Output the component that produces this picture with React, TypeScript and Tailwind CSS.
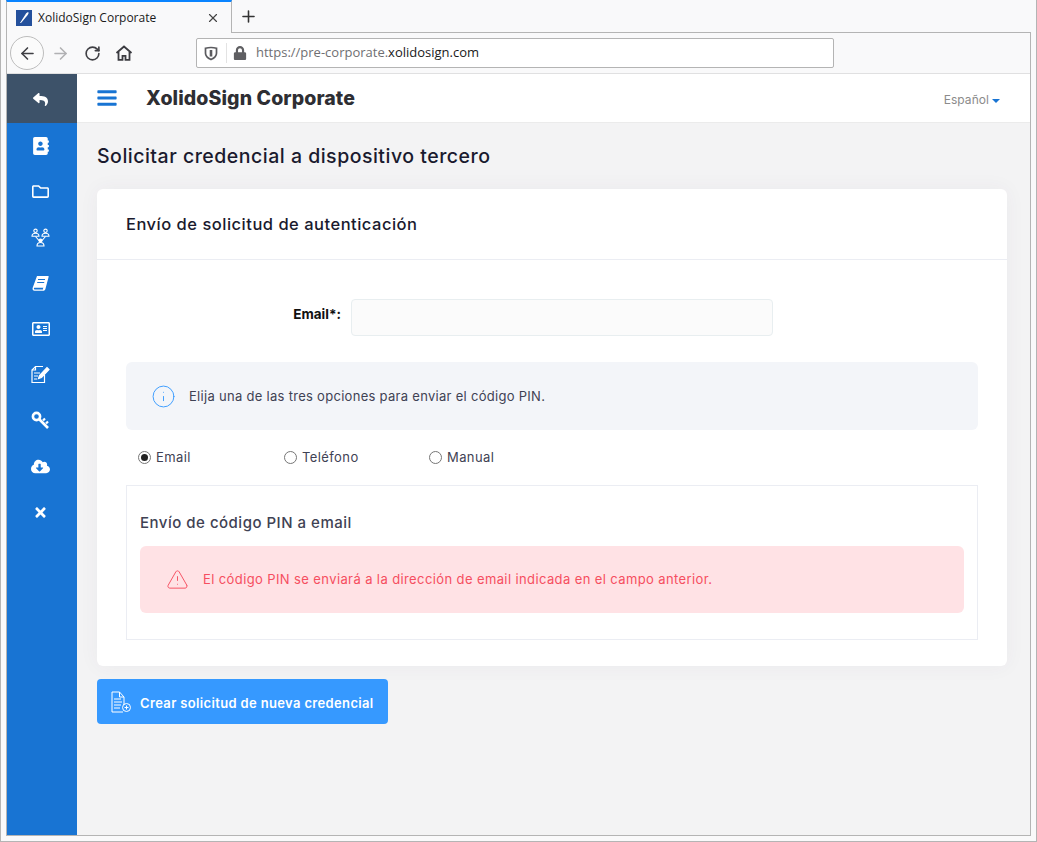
import React from "react";
import { FaReply, FaAddressBook, FaRegFolder, FaRegAddressCard, FaCloudDownloadAlt, FaTimes, FaBars, FaLock } from "react-icons/fa";
import { ArrowLeft, ArrowRight, RotateCw, Plus, X, Info, TriangleAlert } from "lucide-react";

const sans = "font-['Inter','Liberation_Sans',sans-serif]";

function Network() {
  return (
    <svg width="19" height="19" viewBox="0 0 19 19" fill="none" stroke="white" strokeWidth="1.100">
      <circle cx="4.500" cy="2.800" r="1.700" />
      <circle cx="14.500" cy="2.800" r="1.700" />
      <path d="M1 8.200c0-1.800 1.500-3 3.500-3s3.500 1.200 3.500 3zM11 8.200c0-1.800 1.500-3 3.500-3s3.500 1.200 3.500 3z" />
      <path d="M4.500 8.500l3.500 4h3l3.500-4" />
      <circle cx="9.500" cy="12.500" r="1.500" fill="white" />
      <path d="M6 18c0-2 1.500-3.500 3.500-3.500S13 16 13 18z" />
    </svg>
  );
}

function BookIcon() {
  return (
    <svg width="17" height="17" viewBox="0 0 17 17">
      <path d="M5 1h11c.6 0 .8.500.6 1L13.400 14c-.3 1-1 1.800-2.400 1.800H2.500C1 15.800.3 14.500.6 13z" fill="white" />
      <path d="M6 4.500h7M5.200 7.500h7" stroke="#1874d3" strokeWidth="1.200" />
      <path d="M2.200 12.800h9.300c-.6.400-.7 1-.5 1.700H2.700c-.9 0-1-1.400-.5-1.700z" fill="#1874d3" />
    </svg>
  );
}

function KeyIcon() {
  return (
    <svg width="19" height="19" viewBox="0 0 19 19" fill="none" stroke="white">
      <circle cx="5.500" cy="5.500" r="3.600" strokeWidth="2.600" />
      <path d="M8.500 8.500l8.500 8.500" strokeWidth="2.600" />
      <path d="M12 9.500l2-2M15 12.500l2-2" strokeWidth="2.200" />
    </svg>
  );
}

function EditDoc() {
  return (
    <svg width="19" height="19" viewBox="0 0 19 19" fill="none" stroke="white" strokeWidth="1.200">
      <path d="M13.500 10v7.500H1V5l3.500-3.500H12" />
      <path d="M1 5h3.500V1.500" />
      <path d="M3 8h6M3 11h4M3 14h3" />
      <path d="M7.500 13.500l1-3L16 2.500l2 2-7.500 8z" fill="white" />
    </svg>
  );
}

function DocPlus() {
  return (
    <svg width="21" height="22" viewBox="0 0 21 22" fill="none" stroke="white" strokeWidth="1">
      <path d="M13 14V6L8.500 1H1v20h11" />
      <path d="M8.500 1v5H13" />
      <path d="M3 8h7M3 11h8M3 14h7M3 17h6" />
      <circle cx="15.500" cy="16.500" r="4" />
      <path d="M15.500 14.500v4M13.500 16.500h4" />
    </svg>
  );
}

function Shield() {
  return (
    <svg width="14" height="15" viewBox="0 0 14 15" fill="none" stroke="#5b5b5f" strokeWidth="1.700">
      <path d="M1.500 2.200C3 1.800 5 1.500 7 1.500s4 .3 5.500.7v5c0 3-2.500 5-5.500 6.300C4 12.200 1.500 10.200 1.500 7.200z" />
      <path d="M7 4v6.500" strokeWidth="2.600" />
    </svg>
  );
}

function HomeIcon() {
  return (
    <svg width="18" height="16" viewBox="0 0 18 16" fill="none" stroke="#3b3b40" strokeWidth="1.800">
      <path d="M1.500 8L9 1.500 16.500 8" />
      <path d="M3.500 7v7.800h4v-4h3v4h4V7" />
    </svg>
  );
}

function Favicon() {
  return (
    <svg width="16" height="16" viewBox="0 0 16 16">
      <rect width="16" height="16" fill="#24509c" />
      <path d="M4 13L10 3.500c1-1.300 2.500-1.500 2.500-1 .2.800-.2 1.500-.8 2.500L5 13z" fill="#fff" />
    </svg>
  );
}

const sideIcons = [
  <FaAddressBook size={18} />,
  <FaRegFolder size={17} />,
  <Network />,
  <BookIcon />,
  <FaRegAddressCard size={18} />,
  <EditDoc />,
  <KeyIcon />,
  <FaCloudDownloadAlt size={19} />,
  <FaTimes size={15} />,
];

function Radio({ label, checked, className }: { label: string; checked?: boolean; className: string }) {
  return (
    <div className={`flex items-center gap-[5px] ${className}`}>
      <span className="flex h-[13px] w-[13px] items-center justify-center rounded-full border border-[#767676] bg-white">
        {checked && <span className="h-[7px] w-[7px] rounded-full bg-[#222]" />}
      </span>
      <span className="text-[13px] font-normal tracking-[0.4px] text-[#3f4254]">{label}</span>
    </div>
  );
}

export default function App() {
  return (
    <div className={`flex h-[842px] w-[1037px] flex-col overflow-hidden border-x border-b border-[#b4b4b4] bg-[#f9f9fa] pb-[5px] pl-[5px] pr-[5px] ${sans}`}>
      {/* Tab strip */}
      <div className="flex h-[33px] shrink-0 items-stretch">
        <div className="flex w-[226px] items-center border-r border-t-2 border-l border-r-[#b4b4b4] border-t-[#0a84ff] border-l-[#b4b4b4] bg-[#f9f9fa] pl-[9px] pr-[11px]">
          <Favicon />
          <span className="ml-[6px] flex-1 font-['Open_Sans',sans-serif] text-[12px] text-[#1a1a1a]">XolidoSign Corporate</span>
          <X size={14} strokeWidth={2} className="text-[#444]" />
        </div>
        <div className="flex flex-1 items-center border-b border-[#b4b4b4] pl-[7px]">
          <Plus size={19} strokeWidth={2} className="text-[#333]" />
        </div>
      </div>

      <div className="flex min-h-0 flex-1 flex-col border-x border-b border-[#b4b4b4]">
        {/* Toolbar */}
        <div className="flex h-[41px] shrink-0 items-center border-b border-[#e0e0e1] bg-[#f9f9fa] pl-[3px]">
          <div className="flex h-[34px] w-[34px] items-center justify-center rounded-full border border-[#bdbdbd] bg-[#fbfbfb]">
            <ArrowLeft size={19} strokeWidth={2} className="text-[#3f3f44]" />
          </div>
          <ArrowRight size={19} strokeWidth={2} className="ml-[7px] text-[#b1b1b3]" />
          <RotateCw size={17} strokeWidth={2.300} className="ml-[14px] text-[#3f3f44]" />
          <span className="ml-[14px] flex"><HomeIcon /></span>
          <div className="ml-[63px] flex h-[30px] w-[638px] items-center rounded-[2px] border border-[#b4b4b4] bg-white pl-[7px]">
            <Shield />
            <span className="ml-[8px] h-[20px] w-px bg-[#e3e3e3]" />
            <FaLock size={14} className="ml-[6px] text-[#5f5f62]" />
            <span className="ml-[9px] font-['Open_Sans',sans-serif] text-[13px] text-[#6f6f72]">
              https://pre-corporate.<span className="text-[#1a1a1a]">xolidosign.com</span>
            </span>
          </div>
        </div>

        <div className="flex min-h-0 flex-1">
          {/* Sidebar */}
          <aside className="flex w-[70px] shrink-0 flex-col bg-[#1874d3] pr-[3px] text-white">
            <div className="-mr-[3px] flex h-[49px] items-center justify-center bg-[#3d5269] pr-[3px] pt-[1px]">
              <FaReply size={15} />
            </div>
            <div className="flex flex-col">
              {sideIcons.map((icon, i) => (
                <div key={i} className="flex h-[45.800px] items-center justify-center">{icon}</div>
              ))}
            </div>
          </aside>

          <div className="flex min-w-0 flex-1 flex-col bg-[#f3f3f4]">
            {/* Header */}
            <header className="flex h-[49px] shrink-0 items-center border-b border-[#ebebeb] bg-white pl-[20px] pr-[30px]">
              <FaBars size={20} className="scale-x-110 text-[#1874d3]" />
              <h1 className="ml-[29px] mt-[2px] text-[19.500px] font-extrabold tracking-[0.1px] text-[#2e2e33]">XolidoSign Corporate</h1>
              <div className="ml-auto mt-[4px] flex items-center gap-[3px] text-[#8b8b8b]">
                <span className="text-[12px] tracking-[0.05px]">Español</span>
                <span className="mt-[2px] h-0 w-0 border-x-[4px] border-t-[4px] border-x-transparent border-t-[#1874d3]" />
              </div>
            </header>

            <main className="flex-1 px-[20px] pt-[21px]">
              <h2 className="text-[19.500px] font-medium leading-[24px] tracking-[0.5px] text-[#1a1a2e]">Solicitar credencial a dispositivo tercero</h2>

              <section className="mt-[21px] h-[477px] w-[910px] rounded-[6px] bg-white shadow-[0_0_20px_rgba(82,63,105,0.05)]">
                <div className="flex h-[71px] items-center border-b border-[#ebedf3] px-[29px]">
                  <h3 className="text-[16.500px] font-medium tracking-[0.5px] text-[#1a1a2e]">Envío de solicitud de autenticación</h3>
                </div>
                <div className="px-[29px] pt-[39px]">
                  <div className="flex items-start">
                    <label className="mt-[6px] w-[215px] text-right text-[13.500px] font-bold leading-[18px] text-[#111]">Email*:</label>
                    <input className="ml-[10px] h-[37px] w-[422px] rounded-[4px] border border-[#e8eef0] bg-[#fbfbfb]" />
                  </div>

                  <div className="mt-[26px] flex h-[68px] w-[852px] items-center rounded-[6px] bg-[#f3f5f9] pl-[25px]">
                    <Info size={25} strokeWidth={0.900} className="text-[#3699ff]" />
                    <span className="ml-[13px] mt-[1px] text-[13px] tracking-[0.29px] text-[#3f4254]">Elija una de las tres opciones para enviar el código PIN.</span>
                  </div>

                  <div className="mt-[19px] flex h-[17px] items-center pl-[12px]">
                    <Radio label="Email" checked className="w-[146px]" />
                    <Radio label="Teléfono" className="w-[145px]" />
                    <Radio label="Manual" className="" />
                  </div>

                  <div className="mt-[19px] h-[155px] w-[852px] border border-[#ebedf3] px-[13px] pt-[27px]">
                    <h4 className="text-[15px] font-medium leading-[20px] tracking-[0.5px] text-[#3f4254]">Envío de código PIN a email</h4>
                    <div className="mt-[13px] flex h-[67px] items-center rounded-[6px] bg-[#ffe2e5] pl-[26px]">
                      <TriangleAlert size={23} strokeWidth={1} className="text-[#f64e60]" />
                      <span className="ml-[14px] text-[13px] tracking-[0.39px] text-[#f64e60]">El código PIN se enviará a la dirección de email indicada en el campo anterior.</span>
                    </div>
                  </div>
                </div>
              </section>

              <button className="mt-[13px] flex h-[45px] w-[291px] items-center rounded-[4px] bg-[#3699ff] pl-[14px] text-white">
                <DocPlus />
                <span className="ml-[8px] mt-[5px] text-[13px] font-semibold tracking-[0.35px]">Crear solicitud de nueva credencial</span>
              </button>
            </main>
          </div>
        </div>
      </div>
    </div>
  );
}
